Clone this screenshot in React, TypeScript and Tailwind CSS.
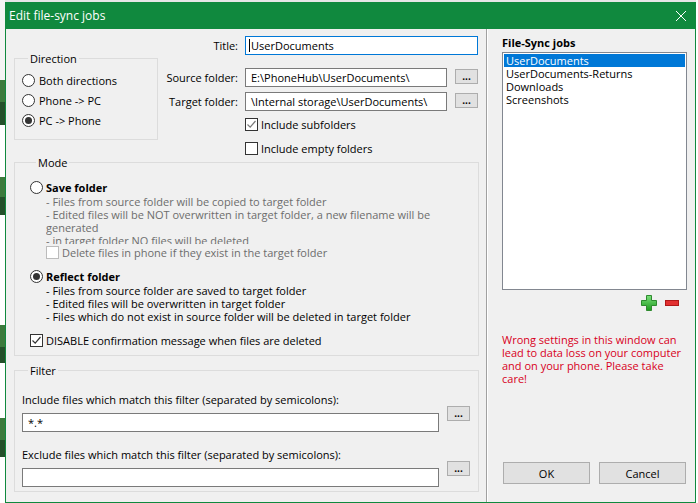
import React from 'react';

function Radio({ checked }: { checked?: boolean }) {
  return (
    <span className="w-[13px] h-[13px] shrink-0 rounded-full border border-[#333] bg-white flex items-center justify-center">
      {checked && <span className="w-[7px] h-[7px] rounded-full bg-[#333]" />}
    </span>
  );
}

function Check({ checked, disabled, mark = '#333' }: { checked?: boolean; disabled?: boolean; mark?: string }) {
  return (
    <span
      className={
        'w-[13px] h-[13px] shrink-0 border bg-white flex items-center justify-center ' +
        (disabled ? 'border-[#bcbcbc]' : 'border-[#333]')
      }
    >
      {checked && (
        <svg width="11" height="11" viewBox="0 0 11 11">
          <path d="M1.5 5.5 L4.2 8.2 L9.5 2" fill="none" stroke={mark} strokeWidth="1.2" />
        </svg>
      )}
    </span>
  );
}

function DotsButton() {
  return (
    <button className="w-[23px] h-[15px] shrink-0 bg-[#e1e1e1] border border-[#adadad] flex items-end justify-center pb-[2px] leading-none text-[10px] font-bold">
      ...
    </button>
  );
}

function TextBox({ value, w, focused }: { value: string; w: string; focused?: boolean }) {
  return (
    <div
      className={
        'h-[19px] bg-white border flex items-center pl-[5px] ' +
        w +
        (focused ? ' border-[#0078d7]' : ' border-[#7a7a7a]')
      }
    >
      {focused && <span className="w-px h-[13px] bg-black -ml-[2px] mr-px" />}
      {value}
    </div>
  );
}

function BackdropStrip() {
  return (
    <div className="w-[5px] h-full flex flex-col bg-white">
      <div className="h-[80px] bg-[#f4f4f4]" />
      <div className="h-[22px] bg-[#3c7a3c]" />
      <div className="h-[23px] bg-[#24502a]" />
      <div className="h-[52px]" />
      <div className="h-[20px] bg-[#3c7a3c]" />
      <div className="h-[18px] bg-[#24502a]" />
      <div className="h-[110px]" />
      <div className="h-[22px] bg-[#3c7a3c]" />
      <div className="h-[16px] bg-[#24502a]" />
      <div className="h-[55px]" />
      <div className="h-[22px] bg-[#3c7a3c]" />
      <div className="h-[17px] bg-[#24502a]" />
    </div>
  );
}

export default function App() {
  return (
    <div className="w-[698px] h-[503px] flex overflow-hidden bg-white text-black text-[11px] leading-[13px] font-['Segoe_UI','Open_Sans',sans-serif]">
      <BackdropStrip />

      <div className="w-[691px] flex flex-col">
        <div className="h-[2px] bg-[#e6e6e6]" />

        {/* window */}
        <div className="flex-1 flex flex-col border-x border-b border-[#10893e]">
          {/* title bar */}
          <div className="h-[27px] bg-[#10893e] flex items-center justify-between pl-[3px] pr-[9px] text-white text-[12px]">
            <span>Edit file-sync jobs</span>
            <svg width="10" height="10" viewBox="0 0 10 10">
              <path d="M0 0 L10 10 M10 0 L0 10" stroke="#fff" strokeWidth="1" />
            </svg>
          </div>

          <div className="flex-1 flex bg-[#f0f0f0]">
            {/* left pane */}
            <div className="w-[480px] pl-[8px] pr-[7px] flex flex-col">
              {/* top section */}
              <div className="flex h-[126px]">
                <div className="w-[144px] pt-[23px]">
                  <fieldset className="border border-[#dcdcdc] pl-[7px] pt-[5px] pb-[9px]">
                    <legend className="ml-[6px] px-[2px]">Direction</legend>
                    <div className="h-[20px] flex items-center gap-[4px]">
                      <Radio />
                      <span>Both directions</span>
                    </div>
                    <div className="h-[20px] flex items-center gap-[4px]">
                      <Radio />
                      <span>Phone -&gt; PC</span>
                    </div>
                    <div className="h-[20px] flex items-center gap-[4px]">
                      <Radio checked />
                      <span>PC -&gt; Phone</span>
                    </div>
                  </fieldset>
                </div>

                <div className="flex-1 pt-[7px] flex flex-col">
                  <div className="flex items-center">
                    <span className="w-[80px] text-right">Title:</span>
                    <div className="ml-[7px]">
                      <TextBox value="UserDocuments" w="w-[233px]" focused />
                    </div>
                  </div>
                  <div className="flex items-start mt-[13px]">
                    <span className="w-[80px] h-[19px] flex items-center justify-end">Source folder:</span>
                    <div className="ml-[7px]">
                      <TextBox value="E:\PhoneHub\UserDocuments\" w="w-[202px]" />
                    </div>
                    <div className="ml-[8px] mt-[1px]">
                      <DotsButton />
                    </div>
                  </div>
                  <div className="flex items-start mt-[5px]">
                    <span className="w-[80px] h-[19px] flex items-center justify-end">Target folder:</span>
                    <div className="ml-[7px]">
                      <TextBox value="\Internal storage\UserDocuments\" w="w-[202px]" />
                    </div>
                    <div className="ml-[8px] mt-[1px]">
                      <DotsButton />
                    </div>
                  </div>
                  <div className="flex items-center gap-[3px] h-[13px] mt-[7px] ml-[87px]">
                    <Check checked mark="#7a7a7a" />
                    <span>Include subfolders</span>
                  </div>
                  <div className="flex items-center gap-[3px] h-[13px] mt-[11px] ml-[87px]">
                    <Check />
                    <span>Include empty folders</span>
                  </div>
                </div>
              </div>

              {/* mode */}
              <fieldset className="border border-[#dcdcdc] pl-[15px] pb-[8px] mt-[1px]">
                <legend className="ml-[6px] px-[2px]">Mode</legend>
                <div className="flex items-center gap-[3px] h-[13px] mt-[12px]">
                  <Radio />
                  <span className="font-bold">Save folder</span>
                </div>
                <div className="ml-[16px] mt-[1px] h-[49px] overflow-hidden text-[#6d6d6d]">
                  <div>- Files from source folder will be copied to target folder</div>
                  <div>- Edited files will be NOT overwritten in target folder, a new filename will be</div>
                  <div>generated</div>
                  <div>- in target folder NO files will be deleted</div>
                </div>
                <div className="flex items-center gap-[3px] h-[13px] ml-[16px] mt-[2px] text-[#6d6d6d]">
                  <Check disabled />
                  <span>Delete files in phone if they exist in the target folder</span>
                </div>
                <div className="flex items-center gap-[3px] h-[13px] mt-[11px]">
                  <Radio checked />
                  <span className="font-bold">Reflect folder</span>
                </div>
                <div className="ml-[16px] mt-[1px]">
                  <div>- Files from source folder are saved to target folder</div>
                  <div>- Edited files will be overwritten in target folder</div>
                  <div>- Files which do not exist in source folder will be deleted in target folder</div>
                </div>
                <div className="flex items-center gap-[3px] h-[13px] mt-[11px]">
                  <Check checked />
                  <span>DISABLE confirmation message when files are deleted</span>
                </div>
              </fieldset>

              {/* filter */}
              <fieldset className="border border-[#dcdcdc] pl-[7px] pb-[4px] mt-[8px]">
                <legend className="ml-[6px] px-[2px]">Filter</legend>
                <div className="mt-[16px]">Include files which match this filter (separated by semicolons):</div>
                <div className="flex items-start">
                  <div className="mt-[7px]">
                    <TextBox value="*.*" w="w-[417px]" />
                  </div>
                  <div className="ml-[8px]">
                    <DotsButton />
                  </div>
                </div>
                <div className="mt-[16px]">Exclude files which match this filter (separated by semicolons):</div>
                <div className="flex items-start">
                  <div className="mt-[7px]">
                    <TextBox value="" w="w-[417px]" />
                  </div>
                  <div className="ml-[8px]">
                    <DotsButton />
                  </div>
                </div>
              </fieldset>
            </div>

            {/* separator */}
            <div className="w-[2px] flex">
              <div className="w-px bg-[#a0a0a0]" />
              <div className="w-px bg-white" />
            </div>

            {/* right pane */}
            <div className="flex-1 pl-[14px] pt-[7px] pb-[18px] flex flex-col">
              <div className="font-bold">File-Sync jobs</div>
              <div className="mt-[3px] w-[185px] h-[238px] bg-white border border-[#828790] p-[1px]">
                <div className="h-[13px] bg-[#0078d7] text-white pl-[2px] flex items-center">UserDocuments</div>
                <div className="h-[13px] pl-[2px] flex items-center">UserDocuments-Returns</div>
                <div className="h-[13px] pl-[2px] flex items-center">Downloads</div>
                <div className="h-[13px] pl-[2px] flex items-center">Screenshots</div>
              </div>
              <div className="w-[185px] flex justify-end items-center gap-[8px] pr-[8px] mt-[5px] h-[16px]">
                <svg width="16" height="16" viewBox="0 0 16 16">
                  <defs>
                    <linearGradient id="pg" x1="0" y1="0" x2="0" y2="1">
                      <stop offset="0" stopColor="#7be07b" />
                      <stop offset="1" stopColor="#1e9a1e" />
                    </linearGradient>
                  </defs>
                  <path
                    d="M5.5 0.5 H10.5 V5.5 H15.5 V10.5 H10.5 V15.5 H5.5 V10.5 H0.5 V5.5 H5.5 Z"
                    fill="url(#pg)"
                    stroke="#2f8a2f"
                    strokeWidth="1"
                  />
                </svg>
                <svg width="14" height="6" viewBox="0 0 14 6">
                  <rect x="0.5" y="0.5" width="13" height="5" fill="#e23030" stroke="#b01818" strokeWidth="1" />
                </svg>
              </div>
              <div className="mt-[22px] text-[#d8001c]">
                Wrong settings in this window can
                <br />
                lead to data loss on your computer
                <br />
                and on your phone. Please take
                <br />
                care!
              </div>
              <div className="mt-auto ml-[1px] flex gap-[9px]">
                <button className="w-[87px] h-[22px] bg-[#e1e1e1] border border-[#adadad]">OK</button>
                <button className="w-[87px] h-[22px] bg-[#e1e1e1] border border-[#adadad]">Cancel</button>
              </div>
            </div>
          </div>
        </div>
      </div>

      <div className="w-[2px] bg-white" />
    </div>
  );
}
